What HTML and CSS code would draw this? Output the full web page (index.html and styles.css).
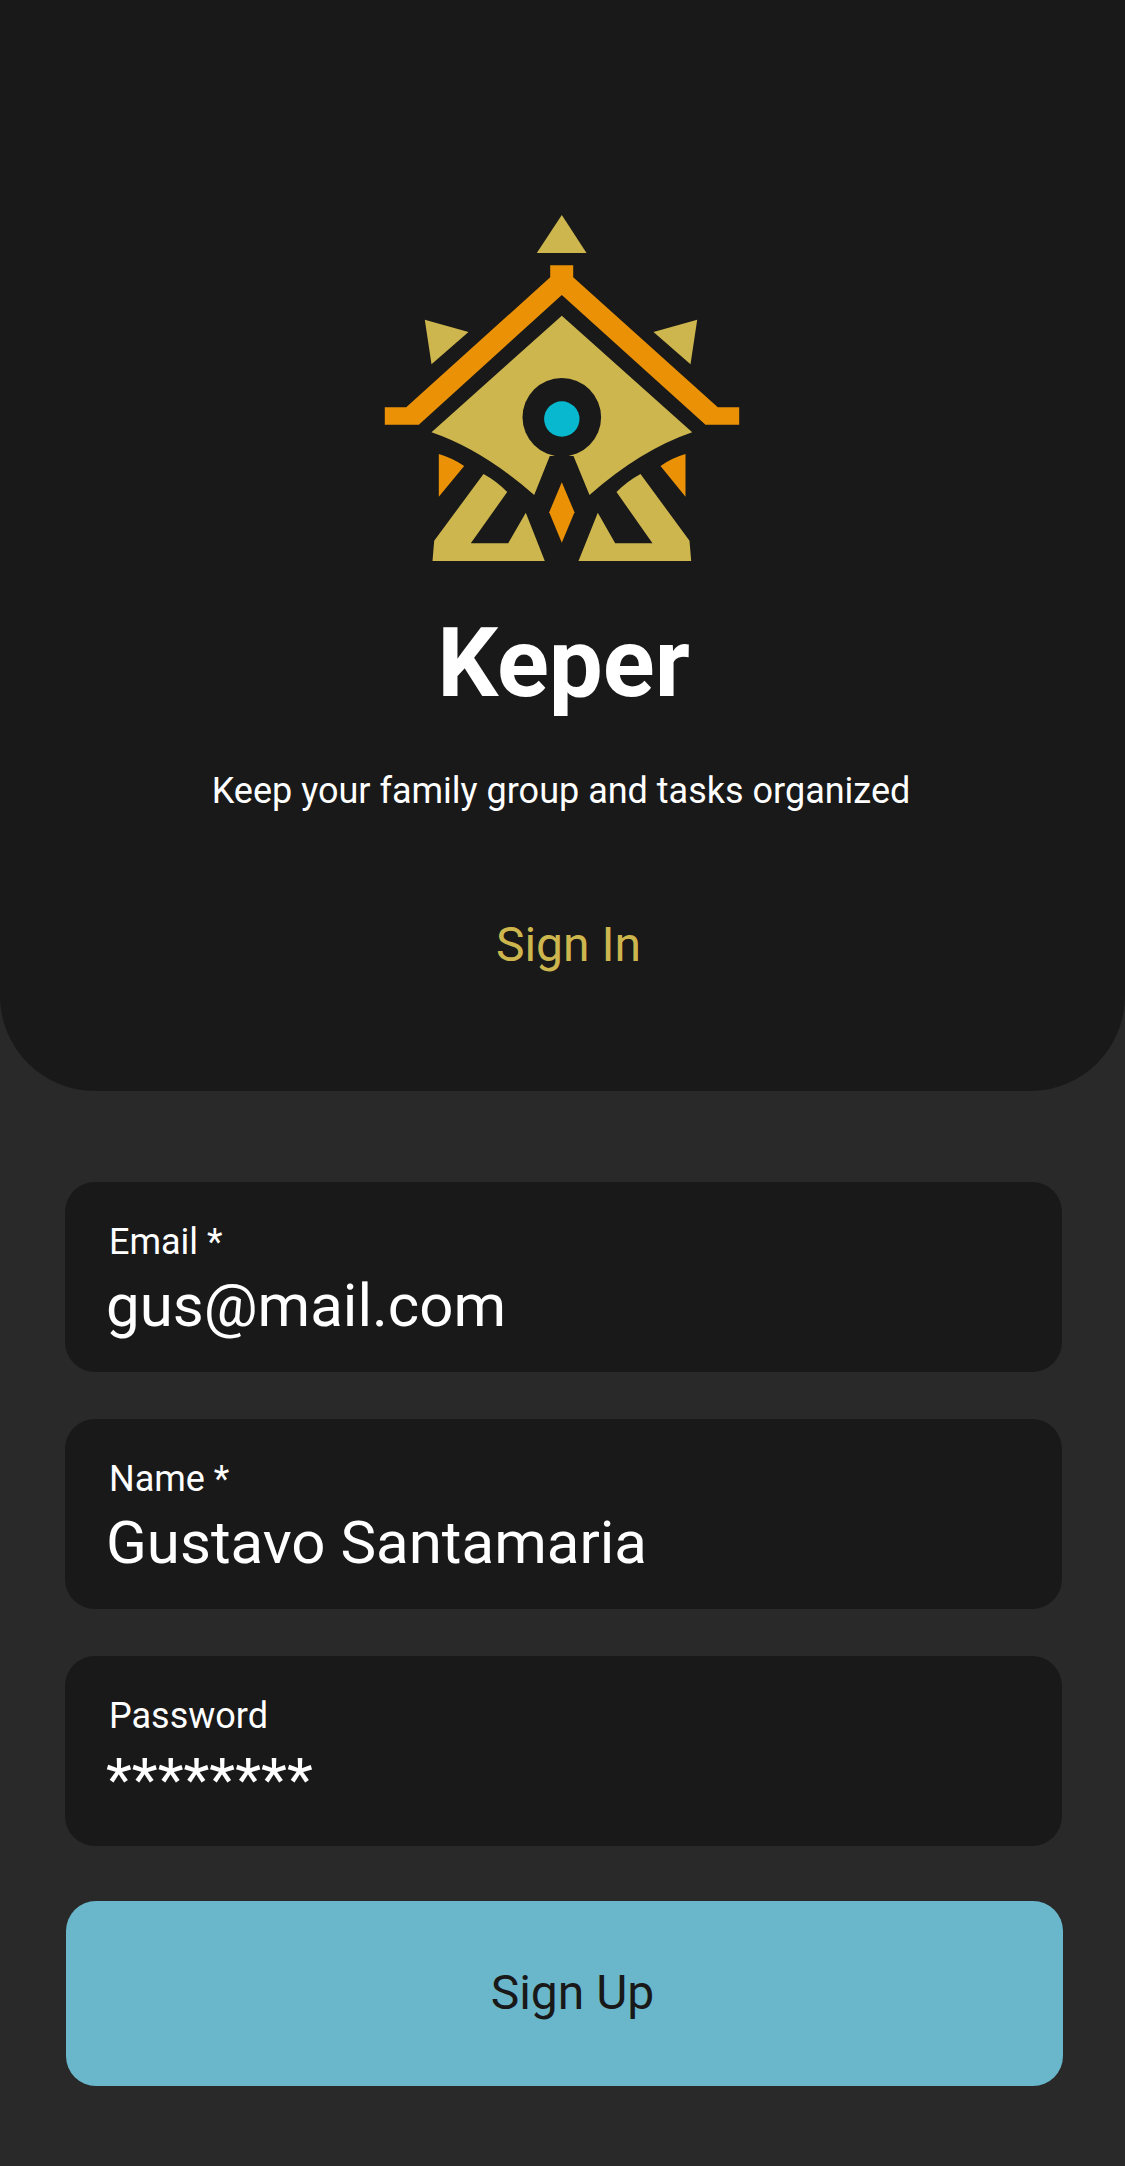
FILE: index.html
```html
<!DOCTYPE html>
<html lang="en">

<head>
    <meta charset="UTF-8">
    <meta name="viewport" content="width=device-width, initial-scale=1.0">
    <title>Keper - Sign Up</title>
    <link rel="stylesheet" href="styles.css">
</head>

<body>
    <header class="hero">
        <svg class="logo" viewBox="362.5 210 400 355" width="400" height="355" aria-label="Keper logo">
            <g fill="#cdb64e">
                <polygon points="562.3,215 537.3,253 587,253" />
                <polygon points="425.3,319.7 469,332 432,364.3" />
                <polygon points="697.7,319.7 654,332 691,364.3" />
                <path d="M562.3 315.7 L692.7 432.3 Q641.4 449.8 590 495 L574 456 L550.3 456 L534.7 495 Q483.2 449.8 432 432.3 Z" />
                <path d="M484 474 Q497 481 507.7 492 L471.3 543.3 L508.7 543.3 L526.3 512.7 L545.3 561 L433 561 L434.7 540.7 Z" />
                <path d="M641 474 Q628 481 617 492 L653 543.3 L615.7 543.3 L598.3 512.7 L579 561 L691.7 561 L690 540.7 Z" />
            </g>
            <g fill="#ea9106">
                <polygon points="550.7,265.3 573.7,265.3 573.7,277.3 718.3,407.3 739.7,407.3 739.7,424.7 706,424.7 562.3,295 419.3,424.7 385.3,424.7 385.3,407.3 406.7,407.3 550.7,277.3" />
                <path d="M439.3 454 Q453 458 464.7 466 L439.3 496.7 Z" />
                <path d="M686 454 Q672 458 661 466 L686 496.7 Z" />
                <polygon points="562.3,482.3 575,512.3 562.3,542.7 549.7,512.3" />
            </g>
            <circle cx="562.3" cy="417.3" r="39.3" fill="#191919" />
            <circle cx="562.3" cy="419" r="17.7" fill="#07b8ce" />
        </svg>
        <h1 class="brand">Keper</h1>
        <p class="tagline">Keep your family group and tasks organized</p>
        <a class="signin-link" href="#">Sign In</a>
    </header>

    <main class="signup-form">
        <div class="field">
            <span class="field-label">Email *</span>
            <span class="field-value">gus@mail.com</span>
        </div>
        <div class="field">
            <span class="field-label">Name *</span>
            <span class="field-value">Gustavo Santamaria</span>
        </div>
        <div class="field">
            <span class="field-label">Password</span>
            <span class="field-value">********</span>
        </div>
        <button class="signup-btn" type="button">Sign Up</button>
    </main>
</body>

</html>
```

FILE: styles.css
```css
body {
    font-family: Roboto, "Liberation Sans", sans-serif;
    background: #292929;
    color: white;
    margin: 0;
}

.hero {
    height: 1091px;
    box-sizing: border-box;
    padding-top: 210px;
    background: #191919;
    border-radius: 0 0 95px 95px;
    display: flex;
    flex-direction: column;
    align-items: center;
}

.logo {
    display: block;
    margin-right: 2px;
}

.brand {
    font-size: 96px;
    font-weight: 700;
    line-height: 112px;
    margin: 42px 0 0 2px;
}

.tagline {
    font-size: 36px;
    line-height: 42px;
    margin: 51px 3px 0 0;
}

.signin-link {
    font-size: 48px;
    line-height: 56px;
    color: #cdb64e;
    text-decoration: none;
    margin: 105px 0 0 12px;
}

.signup-form {
    padding: 91px 63px 0 65px;
}

.field {
    height: 190px;
    box-sizing: border-box;
    padding: 39px 44px 0;
    margin-bottom: 47px;
    background: #191919;
    border-radius: 30px;
    display: flex;
    flex-direction: column;
}

.field-label {
    font-size: 36px;
    line-height: 42px;
}

.field-value {
    font-size: 60px;
    line-height: 70px;
    margin: 8px 0 0 -3px;
}

.signup-btn {
    display: block;
    width: 997px;
    height: 185px;
    margin: 55px 0 0 1px;
    padding: 0 0 2px 16px;
    background: #6ab7cc;
    color: #191919;
    border: none;
    border-radius: 30px;
    font-family: inherit;
    font-size: 48px;
    cursor: pointer;
}
```
